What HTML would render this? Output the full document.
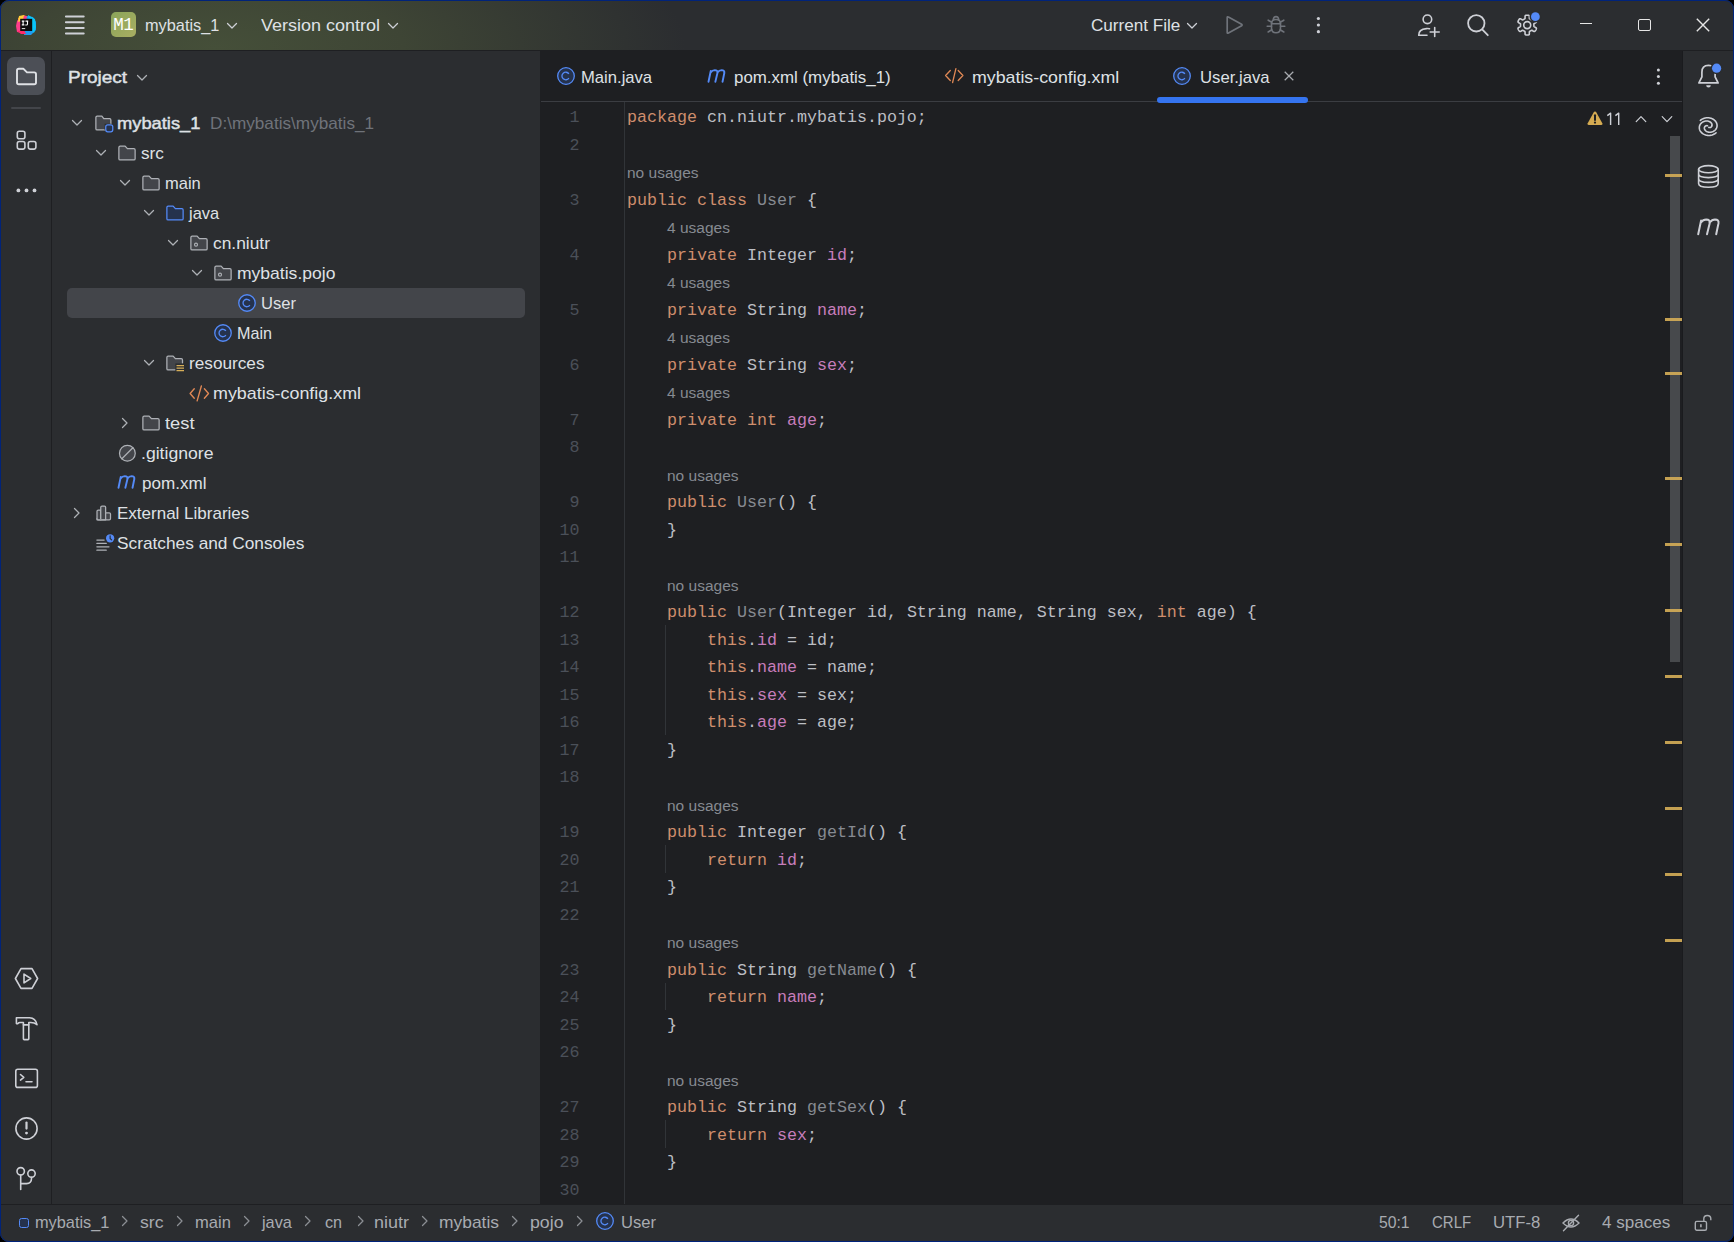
<!DOCTYPE html><html><head><meta charset="utf-8"><style>
*{margin:0;padding:0;box-sizing:border-box}
html,body{width:1734px;height:1242px;overflow:hidden;background:#000}
body{font-family:"Liberation Sans",sans-serif;color:#dfe1e5;position:relative}
.win{position:absolute;left:0;top:0;width:1734px;height:1242px;border-radius:9px;overflow:hidden;background:#2b2d30}
.bd{position:absolute;left:0;top:0;width:1734px;height:1242px;border:1px solid #00237a;border-radius:9px;pointer-events:none}
.a{position:absolute}
.t{position:absolute;white-space:pre;font-size:17px;line-height:20px}
.code{position:absolute;left:0;white-space:pre;font-family:"Liberation Mono",monospace;font-size:16.67px;height:27.5px;line-height:27.5px;color:#bcbec4}
.ln{position:absolute;left:0;white-space:pre;font-family:"Liberation Mono",monospace;font-size:16.67px;height:27.5px;line-height:27.5px;color:#4b5059;text-align:right;width:40px}
.inl{position:absolute;left:0;white-space:pre;font-size:15.5px;height:27.5px;line-height:27.5px;color:#868a91}
.k{color:#cf8e6d}.f{color:#c77dbb}.g{color:#868a91}
svg{position:absolute;overflow:visible}
</style></head><body><div class="win">
<div class="a" style="left:0;top:0;width:1734px;height:50px;background:radial-gradient(ellipse 470px 170px at 215px 48px,#454f39 0%,#3e4535 40%,#2b2d30 100%)"></div>
<div class="a" style="left:0;top:50px;width:1734px;height:1px;background:#1e1f22"></div>
<div class="a" style="left:0;top:51px;width:51px;height:1153px;background:#2b2d30"></div>
<div class="a" style="left:51px;top:51px;width:1px;height:1153px;background:#1e1f22"></div>
<div class="a" style="left:52px;top:51px;width:488px;height:1153px;background:#2b2d30"></div>
<div class="a" style="left:540px;top:51px;width:1142px;height:1153px;background:#1e1f22"></div>
<div class="a" style="left:1683px;top:51px;width:51px;height:1153px;background:#2b2d30"></div>
<div class="a" style="left:0;top:1204px;width:1734px;height:1px;background:#1e1f22"></div>
<div class="a" style="left:0;top:1205px;width:1734px;height:37px;background:#2b2d30"></div>
<div class="a" style="left:67px;top:287.5px;width:458px;height:30px;border-radius:5px;background:#43454a"></div>
<div class="a" style="left:67.50px;top:68.11px;font-size:17px;line-height:18.99px;white-space:pre;color:#dfe1e5;-webkit-text-stroke:0.45px #dfe1e5;transform:scaleX(1.1178);transform-origin:0 0;">Project</div>
<svg style="left:136.3px;top:71.8px" width="12" height="12" viewBox="0 0 12 12" fill="none"><path d="M1.5 3.5L6 8L10.5 3.5" stroke="#aeb1b6" stroke-width="1.25" stroke-linecap="round" stroke-linejoin="round"/></svg>
<svg style="left:71.2px;top:116.7px" width="12" height="12" viewBox="0 0 12 12" fill="none"><path d="M1.5 3.5L6 8L10.5 3.5" stroke="#aeb1b6" stroke-width="1.25" stroke-linecap="round" stroke-linejoin="round"/></svg>
<svg style="left:93.70px;top:112.50px" width="20" height="20" viewBox="0 0 16 16" fill="none" stroke-linecap="round" stroke-linejoin="round"><path d="M8.5 13.5H2.5Q1.5 13.5 1.5 12.5V3.5Q1.5 2.5 2.5 2.5H6.3L7.8 4.5H12.5Q13.5 4.5 13.5 5.5V8.3" fill="#43454a" stroke="#aeb1b6" stroke-width="1"/><path d="M8.5 8.5H13.5V13.5H8.5Z" fill="#2b2d30" stroke="none"/><rect x="9.4" y="9.4" width="5.6" height="5.6" rx="1.6" fill="#25324d" stroke="#548af7" stroke-width="1"/></svg>
<div class="a" style="left:117.00px;top:113.61px;font-size:17px;line-height:18.99px;white-space:pre;color:#dfe1e5;-webkit-text-stroke:0.45px #dfe1e5;transform:scaleX(1.0771);transform-origin:0 0;">mybatis_1</div>
<div class="a" style="left:210.20px;top:113.61px;font-size:17px;line-height:18.99px;white-space:pre;color:#6f737a;transform:scaleX(1.0097);transform-origin:0 0;">D:\mybatis\mybatis_1</div>
<svg style="left:95.2px;top:146.7px" width="12" height="12" viewBox="0 0 12 12" fill="none"><path d="M1.5 3.5L6 8L10.5 3.5" stroke="#aeb1b6" stroke-width="1.25" stroke-linecap="round" stroke-linejoin="round"/></svg>
<svg style="left:116.70px;top:142.50px" width="20" height="20" viewBox="0 0 16 16" fill="none" stroke-linecap="round" stroke-linejoin="round"><path d="M1.5 3.5Q1.5 2.5 2.5 2.5H6.5L8.3 4.5H13.5Q14.5 4.5 14.5 5.5V12.5Q14.5 13.5 13.5 13.5H2.5Q1.5 13.5 1.5 12.5Z" fill="#43454a" stroke="#aeb1b6" stroke-width="1"/></svg>
<div class="a" style="left:141.00px;top:143.62px;font-size:17px;line-height:18.99px;white-space:pre;color:#dfe1e5;transform:scaleX(1.0090);transform-origin:0 0;">src</div>
<svg style="left:119.2px;top:176.7px" width="12" height="12" viewBox="0 0 12 12" fill="none"><path d="M1.5 3.5L6 8L10.5 3.5" stroke="#aeb1b6" stroke-width="1.25" stroke-linecap="round" stroke-linejoin="round"/></svg>
<svg style="left:140.70px;top:172.50px" width="20" height="20" viewBox="0 0 16 16" fill="none" stroke-linecap="round" stroke-linejoin="round"><path d="M1.5 3.5Q1.5 2.5 2.5 2.5H6.5L8.3 4.5H13.5Q14.5 4.5 14.5 5.5V12.5Q14.5 13.5 13.5 13.5H2.5Q1.5 13.5 1.5 12.5Z" fill="#43454a" stroke="#aeb1b6" stroke-width="1"/></svg>
<div class="a" style="left:165.00px;top:173.62px;font-size:17px;line-height:18.99px;white-space:pre;color:#dfe1e5;transform:scaleX(0.9705);transform-origin:0 0;">main</div>
<svg style="left:143.2px;top:206.7px" width="12" height="12" viewBox="0 0 12 12" fill="none"><path d="M1.5 3.5L6 8L10.5 3.5" stroke="#aeb1b6" stroke-width="1.25" stroke-linecap="round" stroke-linejoin="round"/></svg>
<svg style="left:164.70px;top:202.50px" width="20" height="20" viewBox="0 0 16 16" fill="none" stroke-linecap="round" stroke-linejoin="round"><path d="M1.5 3.5Q1.5 2.5 2.5 2.5H6.5L8.3 4.5H13.5Q14.5 4.5 14.5 5.5V12.5Q14.5 13.5 13.5 13.5H2.5Q1.5 13.5 1.5 12.5Z" fill="#25324d" stroke="#548af7" stroke-width="1"/></svg>
<div class="a" style="left:189.41px;top:203.62px;font-size:17px;line-height:18.99px;white-space:pre;color:#dfe1e5;transform:scaleX(0.9651);transform-origin:0 0;">java</div>
<svg style="left:167.2px;top:236.7px" width="12" height="12" viewBox="0 0 12 12" fill="none"><path d="M1.5 3.5L6 8L10.5 3.5" stroke="#aeb1b6" stroke-width="1.25" stroke-linecap="round" stroke-linejoin="round"/></svg>
<svg style="left:188.70px;top:232.50px" width="20" height="20" viewBox="0 0 16 16" fill="none" stroke-linecap="round" stroke-linejoin="round"><path d="M1.5 3.5Q1.5 2.5 2.5 2.5H6.5L8.3 4.5H13.5Q14.5 4.5 14.5 5.5V12.5Q14.5 13.5 13.5 13.5H2.5Q1.5 13.5 1.5 12.5Z" fill="#43454a" stroke="#aeb1b6" stroke-width="1"/><circle cx="5.6" cy="9.3" r="1.2" stroke="#aeb1b6" stroke-width="0.9"/></svg>
<div class="a" style="left:213.00px;top:233.62px;font-size:17px;line-height:18.99px;white-space:pre;color:#dfe1e5;transform:scaleX(1.0222);transform-origin:0 0;">cn.niutr</div>
<svg style="left:191.2px;top:266.7px" width="12" height="12" viewBox="0 0 12 12" fill="none"><path d="M1.5 3.5L6 8L10.5 3.5" stroke="#aeb1b6" stroke-width="1.25" stroke-linecap="round" stroke-linejoin="round"/></svg>
<svg style="left:212.70px;top:262.50px" width="20" height="20" viewBox="0 0 16 16" fill="none" stroke-linecap="round" stroke-linejoin="round"><path d="M1.5 3.5Q1.5 2.5 2.5 2.5H6.5L8.3 4.5H13.5Q14.5 4.5 14.5 5.5V12.5Q14.5 13.5 13.5 13.5H2.5Q1.5 13.5 1.5 12.5Z" fill="#43454a" stroke="#aeb1b6" stroke-width="1"/><circle cx="5.6" cy="9.3" r="1.2" stroke="#aeb1b6" stroke-width="0.9"/></svg>
<div class="a" style="left:237.00px;top:263.62px;font-size:17px;line-height:18.99px;white-space:pre;color:#dfe1e5;transform:scaleX(1.0309);transform-origin:0 0;">mybatis.pojo</div>
<svg style="left:236.70px;top:292.50px" width="20" height="20" viewBox="0 0 16 16" fill="none" stroke-linecap="round" stroke-linejoin="round"><circle cx="8" cy="8" r="6.6" fill="#25324d" stroke="#548af7" stroke-width="1.05"/><path d="M10.3 6.3A3 3 0 1 0 10.3 9.7" stroke="#548af7" stroke-width="1.05" stroke-linecap="butt"/></svg>
<div class="a" style="left:261.00px;top:293.62px;font-size:17px;line-height:18.99px;white-space:pre;color:#dfe1e5;transform:scaleX(0.9757);transform-origin:0 0;">User</div>
<svg style="left:212.70px;top:322.50px" width="20" height="20" viewBox="0 0 16 16" fill="none" stroke-linecap="round" stroke-linejoin="round"><circle cx="8" cy="8" r="6.6" fill="#25324d" stroke="#548af7" stroke-width="1.05"/><path d="M10.3 6.3A3 3 0 1 0 10.3 9.7" stroke="#548af7" stroke-width="1.05" stroke-linecap="butt"/></svg>
<div class="a" style="left:237.00px;top:323.62px;font-size:17px;line-height:18.99px;white-space:pre;color:#dfe1e5;transform:scaleX(0.9488);transform-origin:0 0;">Main</div>
<svg style="left:143.2px;top:356.7px" width="12" height="12" viewBox="0 0 12 12" fill="none"><path d="M1.5 3.5L6 8L10.5 3.5" stroke="#aeb1b6" stroke-width="1.25" stroke-linecap="round" stroke-linejoin="round"/></svg>
<svg style="left:164.70px;top:352.50px" width="20" height="20" viewBox="0 0 16 16" fill="none" stroke-linecap="round" stroke-linejoin="round"><path d="M8.3 13.5H2.5Q1.5 13.5 1.5 12.5V3.5Q1.5 2.5 2.5 2.5H6.5L8.3 4.5H13Q14 4.5 14 5.5V8.3" fill="#43454a" stroke="#aeb1b6" stroke-width="1"/><path d="M8.3 8.3H15.5V15.2H8.3Z" fill="#2b2d30" stroke="none"/><path d="M9.2 10.1H15.2M9.2 12.1H15.2M9.2 14.1H15.2" stroke="#d6ae58" stroke-width="1.05" stroke-linecap="butt"/></svg>
<div class="a" style="left:189.00px;top:353.62px;font-size:17px;line-height:18.99px;white-space:pre;color:#dfe1e5;transform:scaleX(1.0117);transform-origin:0 0;">resources</div>
<svg style="left:188.70px;top:382.50px" width="20" height="20" viewBox="0 0 16 16" fill="none" stroke-linecap="round" stroke-linejoin="round"><path d="M4.2 4.6L0.9 8.4L4.2 12.2M12.3 4.6L15.6 8.4L12.3 12.2M9.9 2.4L6.5 14.3" stroke="#e08855" stroke-width="1.1"/></svg>
<div class="a" style="left:213.00px;top:383.62px;font-size:17px;line-height:18.99px;white-space:pre;color:#dfe1e5;transform:scaleX(1.0514);transform-origin:0 0;">mybatis-config.xml</div>
<svg style="left:119.2px;top:416.5px" width="12" height="12" viewBox="0 0 12 12" fill="none"><path d="M3.5 1.5L8 6L3.5 10.5" stroke="#aeb1b6" stroke-width="1.25" stroke-linecap="round" stroke-linejoin="round"/></svg>
<svg style="left:140.70px;top:412.50px" width="20" height="20" viewBox="0 0 16 16" fill="none" stroke-linecap="round" stroke-linejoin="round"><path d="M1.5 3.5Q1.5 2.5 2.5 2.5H6.5L8.3 4.5H13.5Q14.5 4.5 14.5 5.5V12.5Q14.5 13.5 13.5 13.5H2.5Q1.5 13.5 1.5 12.5Z" fill="#43454a" stroke="#aeb1b6" stroke-width="1"/></svg>
<div class="a" style="left:165.00px;top:413.62px;font-size:17px;line-height:18.99px;white-space:pre;color:#dfe1e5;transform:scaleX(1.0778);transform-origin:0 0;">test</div>
<svg style="left:116.70px;top:442.50px" width="20" height="20" viewBox="0 0 16 16" fill="none" stroke-linecap="round" stroke-linejoin="round"><circle cx="8.3" cy="8.2" r="6.3" fill="#43454a" stroke="#aeb1b6" stroke-width="1"/><path d="M12.7 3.8L3.9 12.6" stroke="#aeb1b6" stroke-width="1"/></svg>
<div class="a" style="left:141.00px;top:443.62px;font-size:17px;line-height:18.99px;white-space:pre;color:#dfe1e5;transform:scaleX(1.0364);transform-origin:0 0;">.gitignore</div>
<svg style="left:115.5px;top:474.5px" width="20.28" height="14.04" viewBox="0 0 26 18"><path d="M3.2 16.3L6.1 2.5M5.7 4.6Q8.2 1.5 11.2 1.5Q15.3 1.6 14.7 5.2L12 16.3M14.5 4.6Q17 1.5 20 1.5Q24.1 1.6 23.5 5.2L21.2 16.3" fill="none" stroke="#548af7" stroke-width="2.44" stroke-linecap="round" stroke-linejoin="round"/></svg>
<div class="a" style="left:141.50px;top:473.62px;font-size:17px;line-height:18.99px;white-space:pre;color:#dfe1e5;transform:scaleX(1.0037);transform-origin:0 0;">pom.xml</div>
<svg style="left:71.2px;top:506.5px" width="12" height="12" viewBox="0 0 12 12" fill="none"><path d="M3.5 1.5L8 6L3.5 10.5" stroke="#aeb1b6" stroke-width="1.25" stroke-linecap="round" stroke-linejoin="round"/></svg>
<svg style="left:94.50px;top:502.50px" width="20" height="20" viewBox="0 0 16 16" fill="none" stroke-linecap="round" stroke-linejoin="round"><path d="M1.6 13.4V6.6Q1.6 5.6 2.6 5.6H4.6V13.4Z" fill="#43454a" stroke="#aeb1b6" stroke-width="1"/><path d="M4.6 13.4V3.3Q4.6 2.4 5.6 2.4H7.6Q8.5 2.4 8.5 3.3V13.4Z" fill="#43454a" stroke="#aeb1b6" stroke-width="1"/><path d="M8.5 13.4V7.8H11.4Q12.4 7.8 12.4 8.8V12.4Q12.4 13.4 11.4 13.4H2.6Q1.6 13.4 1.6 12.4" fill="#43454a" stroke="#aeb1b6" stroke-width="1"/></svg>
<div class="a" style="left:117.00px;top:503.62px;font-size:17px;line-height:18.99px;white-space:pre;color:#dfe1e5;">External Libraries</div>
<svg style="left:94.50px;top:532.50px" width="20" height="20" viewBox="0 0 16 16" fill="none" stroke-linecap="round" stroke-linejoin="round"><path d="M1.5 5.6H7.3M1.5 8.3H9M1.5 11H11.2M1.5 13.7H9" stroke="#aeb1b6" stroke-width="1"/><circle cx="12.1" cy="4.2" r="3.9" fill="#2b2d30"/><circle cx="12.1" cy="4.2" r="3.3" fill="#548af7"/><path d="M12.1 2.3V4.4L13.3 5.5" stroke="#2b2d30" stroke-width="0.9"/></svg>
<div class="a" style="left:117.00px;top:533.62px;font-size:17px;line-height:18.99px;white-space:pre;color:#dfe1e5;transform:scaleX(1.0164);transform-origin:0 0;">Scratches and Consoles</div>
<svg style="left:15px;top:14px" width="22" height="22" viewBox="0 0 22 22"><polygon points="3,4 9,1 13,3 11,10 4,15" fill="#ff8a2a"/><polygon points="2,7 6,2 12,2 14,9 7,19 2,18 1,12" fill="#ff3d8b"/><polygon points="4,2 9,1 8,6 3,8" fill="#ffcf3a"/><polygon points="12,2 18,3 21,8 21,16 16,21 9,21 10,12" fill="#1e9bf0"/><polygon points="13,1 20,5 21,13 19,19 15,15" fill="#09c6f9"/><polygon points="2,17 6,20 11,20 9,16" fill="#ff2a6a"/><rect x="5.2" y="4.8" width="12" height="12.2" fill="#0c0c0c"/><path d="M6.8 7.1H9.4M8.1 7.1V10.9M6.8 10.9H9.4M10.5 7.1H13.2M12.5 7.1V9.9Q12.5 11 11.3 11H10.3" stroke="#fff" stroke-width="1.1" fill="none"/><path d="M6.8 14.6H10.2" stroke="#fff" stroke-width="0.9"/></svg>
<svg style="left:64px;top:14px" width="22" height="22" viewBox="0 0 22 22"><path d="M1.9 2.4H19.7M1.9 8.2H19.7M1.9 13.9H19.7M1.9 19.5H19.7" stroke="#ced0d6" stroke-width="2" stroke-linecap="round"/></svg>
<div class="a" style="left:111px;top:12px;width:25px;height:25px;border-radius:5px;background:linear-gradient(135deg,#8aa55a,#a9ae62)"></div>
<div class="a" style="left:111px;top:12px;width:25px;height:25px;font-family:'Liberation Mono',monospace;font-size:17.5px;line-height:26px;text-align:center;color:#fff;letter-spacing:-0.6px;text-indent:-0.6px">M1</div>
<div class="a" style="left:144.50px;top:15.81px;font-size:17px;line-height:18.99px;white-space:pre;color:#dfe1e5;transform:scaleX(0.9610);transform-origin:0 0;">mybatis_1</div>
<svg style="left:225.8px;top:19.6px" width="12" height="12" viewBox="0 0 12 12" fill="none"><path d="M1.5 3.5L6 8L10.5 3.5" stroke="#ced0d6" stroke-width="1.25" stroke-linecap="round" stroke-linejoin="round"/></svg>
<div class="a" style="left:261.30px;top:15.81px;font-size:17px;line-height:18.99px;white-space:pre;color:#dfe1e5;transform:scaleX(1.0582);transform-origin:0 0;">Version control</div>
<svg style="left:386.5px;top:19.6px" width="12" height="12" viewBox="0 0 12 12" fill="none"><path d="M1.5 3.5L6 8L10.5 3.5" stroke="#ced0d6" stroke-width="1.25" stroke-linecap="round" stroke-linejoin="round"/></svg>
<div class="a" style="left:1090.80px;top:15.81px;font-size:17px;line-height:18.99px;white-space:pre;color:#dfe1e5;transform:scaleX(1.0065);transform-origin:0 0;">Current File</div>
<svg style="left:1186.2px;top:19.6px" width="12" height="12" viewBox="0 0 12 12" fill="none"><path d="M1.5 3.5L6 8L10.5 3.5" stroke="#ced0d6" stroke-width="1.25" stroke-linecap="round" stroke-linejoin="round"/></svg>
<svg style="left:1224px;top:14px" width="22" height="22" viewBox="0 0 22 22"><path d="M3.2 3.6Q3.2 2.3 4.4 3L17.6 10.3Q18.6 11 17.6 11.7L4.4 19Q3.2 19.7 3.2 18.4Z" fill="none" stroke="#6f737a" stroke-width="1.7" stroke-linejoin="round"/></svg>
<svg style="left:1265px;top:14px" width="22" height="22" viewBox="0 0 22 22"><g fill="none" stroke="#6f737a" stroke-width="1.6" stroke-linecap="round"><path d="M6.5 9.5Q6.5 5.5 11 5.5Q15.5 5.5 15.5 9.5V14Q15.5 18.8 11 18.8Q6.5 18.8 6.5 14Z"/><path d="M8.3 5.8Q8.5 2.6 11 2.6Q13.5 2.6 13.7 5.8"/><path d="M6.5 9.8H15.5M6.5 12.2L2.2 12.2M15.5 12.2L19.8 12.2M6.8 8.2L3.2 6.2M15.2 8.2L18.8 6.2M6.8 15.8L3.2 18M15.2 15.8L18.8 18"/></g></svg>
<svg style="left:1312px;top:14px" width="12" height="22" viewBox="0 0 12 22"><circle cx="6.4" cy="4.5" r="1.6" fill="#ced0d6"/><circle cx="6.4" cy="11" r="1.6" fill="#ced0d6"/><circle cx="6.4" cy="17.7" r="1.6" fill="#ced0d6"/></svg>
<svg style="left:1416px;top:12px" width="26" height="26" viewBox="0 0 26 26"><g fill="none" stroke="#ced0d6" stroke-width="1.6" stroke-linecap="round"><circle cx="11.4" cy="7.3" r="4.3"/><path d="M2.8 23.2Q2.5 17.2 10.5 16.6Q12.2 16.5 13.5 16.8"/><path d="M2.8 23.2H11M18.7 15.5V24.5M14.2 20H23.2"/></g></svg>
<svg style="left:1464px;top:11px" width="28" height="28" viewBox="0 0 28 28"><g fill="none" stroke="#ced0d6" stroke-width="1.8" stroke-linecap="round"><circle cx="12.3" cy="12.3" r="8.2"/><path d="M18.4 18.6L23.8 24.2"/></g></svg>
<svg style="left:1516px;top:11px" width="28" height="28" viewBox="0 0 28 28"><path d="M17.90 14.10 L17.90 14.28 L17.89 14.45 L17.89 14.63 L17.87 14.80 L17.87 14.98 L17.87 15.16 L17.91 15.34 L18.08 15.56 L18.49 15.85 L19.22 16.25 L19.92 16.68 L20.30 17.06 L20.41 17.36 L20.39 17.63 L20.33 17.88 L20.23 18.12 L20.13 18.36 L20.02 18.59 L19.90 18.82 L19.77 19.05 L19.64 19.27 L19.50 19.49 L19.35 19.70 L19.20 19.91 L19.04 20.11 L18.85 20.30 L18.63 20.45 L18.31 20.50 L17.80 20.36 L17.07 19.97 L16.36 19.54 L15.90 19.32 L15.63 19.29 L15.45 19.35 L15.29 19.43 L15.14 19.53 L15.00 19.63 L14.85 19.72 L14.70 19.82 L14.55 19.90 L14.40 19.99 L14.24 20.07 L14.09 20.15 L13.93 20.23 L13.77 20.31 L13.62 20.40 L13.48 20.54 L13.37 20.79 L13.33 21.29 L13.35 22.12 L13.32 22.95 L13.19 23.46 L12.98 23.71 L12.74 23.83 L12.49 23.89 L12.23 23.93 L11.98 23.96 L11.72 23.98 L11.46 23.99 L11.20 24.00 L10.94 23.99 L10.68 23.98 L10.42 23.96 L10.17 23.93 L9.91 23.89 L9.66 23.83 L9.42 23.71 L9.21 23.46 L9.08 22.95 L9.05 22.12 L9.07 21.29 L9.03 20.79 L8.92 20.54 L8.78 20.40 L8.63 20.31 L8.47 20.23 L8.31 20.15 L8.16 20.07 L8.00 19.99 L7.85 19.90 L7.70 19.82 L7.55 19.72 L7.40 19.63 L7.26 19.53 L7.11 19.43 L6.95 19.35 L6.77 19.29 L6.50 19.32 L6.04 19.54 L5.33 19.97 L4.60 20.36 L4.09 20.50 L3.77 20.45 L3.55 20.30 L3.36 20.11 L3.20 19.91 L3.05 19.70 L2.90 19.49 L2.76 19.27 L2.63 19.05 L2.50 18.82 L2.38 18.59 L2.27 18.36 L2.17 18.12 L2.07 17.88 L2.01 17.63 L1.99 17.36 L2.10 17.06 L2.48 16.68 L3.18 16.25 L3.91 15.85 L4.32 15.56 L4.49 15.34 L4.53 15.16 L4.53 14.98 L4.53 14.80 L4.51 14.63 L4.51 14.45 L4.50 14.28 L4.50 14.10 L4.50 13.92 L4.51 13.75 L4.51 13.57 L4.53 13.40 L4.53 13.22 L4.53 13.04 L4.49 12.86 L4.32 12.64 L3.91 12.35 L3.18 11.95 L2.48 11.52 L2.10 11.14 L1.99 10.84 L2.01 10.57 L2.07 10.32 L2.17 10.08 L2.27 9.84 L2.38 9.61 L2.50 9.38 L2.63 9.15 L2.76 8.93 L2.90 8.71 L3.05 8.50 L3.20 8.29 L3.36 8.09 L3.55 7.90 L3.77 7.75 L4.09 7.70 L4.60 7.84 L5.33 8.23 L6.04 8.66 L6.50 8.88 L6.77 8.91 L6.95 8.85 L7.11 8.77 L7.26 8.67 L7.40 8.57 L7.55 8.48 L7.70 8.38 L7.85 8.30 L8.00 8.21 L8.16 8.13 L8.31 8.05 L8.47 7.97 L8.63 7.89 L8.78 7.80 L8.92 7.66 L9.03 7.41 L9.07 6.91 L9.05 6.08 L9.08 5.25 L9.21 4.74 L9.42 4.49 L9.66 4.37 L9.91 4.31 L10.17 4.27 L10.42 4.24 L10.68 4.22 L10.94 4.21 L11.20 4.20 L11.46 4.21 L11.72 4.22 L11.98 4.24 L12.23 4.27 L12.49 4.31 L12.74 4.37 L12.98 4.49 L13.19 4.74 L13.32 5.25 L13.35 6.08 L13.33 6.91 L13.37 7.41 L13.48 7.66 L13.62 7.80 L13.77 7.89 L13.93 7.97 L14.09 8.05 L14.24 8.13 L14.40 8.21 L14.55 8.30 L14.70 8.38 L14.85 8.48 L15.00 8.57 L15.14 8.67 L15.29 8.77 L15.45 8.85 L15.63 8.91 L15.90 8.88 L16.36 8.66 L17.07 8.23 L17.80 7.84 L18.31 7.70 L18.63 7.75 L18.85 7.90 L19.04 8.09 L19.20 8.29 L19.35 8.50 L19.50 8.71 L19.64 8.93 L19.77 9.15 L19.90 9.38 L20.02 9.61 L20.13 9.84 L20.23 10.08 L20.33 10.32 L20.39 10.57 L20.41 10.84 L20.30 11.14 L19.92 11.52 L19.22 11.95 L18.49 12.35 L18.08 12.64 L17.91 12.86 L17.87 13.04 L17.87 13.22 L17.87 13.40 L17.89 13.57 L17.89 13.75 L17.90 13.92Z" fill="none" stroke="#ced0d6" stroke-width="1.6" stroke-linejoin="round"/><circle cx="11.2" cy="14.1" r="3.5" fill="none" stroke="#ced0d6" stroke-width="1.6"/><circle cx="19.4" cy="5.7" r="5.9" fill="#2b2d30"/><circle cx="19.4" cy="5.7" r="4.4" fill="#548af7"/></svg>
<div class="a" style="left:1580px;top:23px;width:12px;height:1.4px;background:#e6e6e6"></div>
<div class="a" style="left:1638px;top:19px;width:12.5px;height:12px;border:1.4px solid #e6e6e6;border-radius:2px"></div>
<svg style="left:1696px;top:18px" width="14" height="14" viewBox="0 0 14 14"><path d="M0.8 0.8L13.2 13.2M13.2 0.8L0.8 13.2" stroke="#e6e6e6" stroke-width="1.4"/></svg>
<svg style="left:556px;top:65.9px" width="20" height="20" viewBox="0 0 20 20"><circle cx="10" cy="10" r="8.3" fill="#25324d" stroke="#548af7" stroke-width="1.3"/><path d="M12.9 7.9A3.8 3.8 0 1 0 12.9 12.1" fill="none" stroke="#548af7" stroke-width="1.3"/></svg>
<div class="a" style="left:581.40px;top:67.61px;font-size:17px;line-height:18.99px;white-space:pre;color:#dfe1e5;transform:scaleX(0.9774);transform-origin:0 0;">Main.java</div>
<svg style="left:705.5px;top:68.5px" width="20.28" height="14.04" viewBox="0 0 26 18"><path d="M3.2 16.3L6.1 2.5M5.7 4.6Q8.2 1.5 11.2 1.5Q15.3 1.6 14.7 5.2L12 16.3M14.5 4.6Q17 1.5 20 1.5Q24.1 1.6 23.5 5.2L21.2 16.3" fill="none" stroke="#548af7" stroke-width="2.44" stroke-linecap="round" stroke-linejoin="round"/></svg>
<div class="a" style="left:734.30px;top:67.61px;font-size:17px;line-height:18.99px;white-space:pre;color:#dfe1e5;transform:scaleX(0.9933);transform-origin:0 0;">pom.xml (mybatis_1)</div>
<svg style="left:944px;top:66px" width="22" height="20" viewBox="0 0 22 20"><path d="M6.3 4.5L1.6 9.5L6.3 14.5M14.2 4.5L18.9 9.5L14.2 14.5M11.9 2.6L8.6 16.5" fill="none" stroke="#e08855" stroke-width="1.3" stroke-linecap="round" stroke-linejoin="round"/></svg>
<div class="a" style="left:971.60px;top:67.61px;font-size:17px;line-height:18.99px;white-space:pre;color:#dfe1e5;transform:scaleX(1.0458);transform-origin:0 0;">mybatis-config.xml</div>
<svg style="left:1172px;top:65.8px" width="20" height="20" viewBox="0 0 20 20"><circle cx="10" cy="10" r="8.3" fill="#25324d" stroke="#548af7" stroke-width="1.3"/><path d="M12.9 7.9A3.8 3.8 0 1 0 12.9 12.1" fill="none" stroke="#548af7" stroke-width="1.3"/></svg>
<div class="a" style="left:1200.20px;top:67.61px;font-size:17px;line-height:18.99px;white-space:pre;color:#dfe1e5;transform:scaleX(0.9818);transform-origin:0 0;">User.java</div>
<svg style="left:1284px;top:71px" width="10" height="10" viewBox="0 0 10 10"><path d="M0.7 0.7L9.3 9.3M9.3 0.7L0.7 9.3" stroke="#a8abb0" stroke-width="1.25"/></svg>
<svg style="left:1652px;top:66px" width="12" height="22" viewBox="0 0 12 22"><circle cx="6.4" cy="4" r="1.5" fill="#ced0d6"/><circle cx="6.4" cy="10.6" r="1.5" fill="#ced0d6"/><circle cx="6.4" cy="17.2" r="1.5" fill="#ced0d6"/></svg>
<div class="a" style="left:7px;top:57px;width:38px;height:38px;border-radius:7px;background:#4c4f56"></div>
<svg style="left:14px;top:64px" width="24" height="24" viewBox="0 0 24 24"><path d="M3 6.6Q3 4.8 4.8 4.8H9.5L13 8.35H20.2Q22 8.35 22 10.15V18.4Q22 20.2 20.2 20.2H4.8Q3 20.2 3 18.4Z" fill="none" stroke="#dfe1e5" stroke-width="1.9" stroke-linejoin="round"/></svg>
<div class="a" style="left:11px;top:107px;width:30px;height:2px;border-radius:1px;background:#43454a"></div>
<svg style="left:14px;top:128px" width="24" height="24" viewBox="0 0 24 24"><g fill="none" stroke="#ced0d6" stroke-width="1.6"><rect x="3.3" y="3.2" width="7.6" height="7.6" rx="2"/><rect x="3.3" y="13.5" width="7.6" height="7.6" rx="2"/><rect x="14.3" y="13.5" width="7.6" height="7.6" rx="2"/></g></svg>
<svg style="left:14px;top:180px" width="24" height="20" viewBox="0 0 24 20"><circle cx="4.4" cy="10.4" r="1.9" fill="#ced0d6"/><circle cx="12.5" cy="10.4" r="1.9" fill="#ced0d6"/><circle cx="20.5" cy="10.4" r="1.9" fill="#ced0d6"/></svg>
<svg style="left:14px;top:966px" width="25" height="25" viewBox="0 0 25 25"><g fill="none" stroke="#ced0d6" stroke-width="1.6" stroke-linejoin="round"><path d="M7 2.6H18L23.6 12.5L18 22.4H7L1.4 12.5Z"/><path d="M10 8.1L16.7 12.5L10 16.9Z"/></g></svg>
<svg style="left:14px;top:1015px" width="25" height="27" viewBox="0 0 25 27"><g fill="none" stroke="#ced0d6" stroke-width="1.6" stroke-linejoin="round"><path d="M2.4 2.8H15.5Q21.6 3 23 9.6Q20.5 7.5 16.8 7.5H14.8V9.8H9.4V7.5H6Q4.6 7.5 3.9 8.6H2.4Z"/><path d="M9.4 9.8H14.8V23.8Q14.8 24.6 14 24.6H10.2Q9.4 24.6 9.4 23.8Z"/></g></svg>
<svg style="left:14px;top:1066px" width="25" height="25" viewBox="0 0 25 25"><g fill="none" stroke="#ced0d6" stroke-width="1.6" stroke-linejoin="round" stroke-linecap="round"><rect x="1.8" y="3.2" width="21.6" height="18.2" rx="2"/><path d="M6.5 8.5L9.8 11.3L6.5 14.1M12 15.8H18"/></g></svg>
<svg style="left:14px;top:1116px" width="25" height="25" viewBox="0 0 25 25"><g fill="none" stroke="#ced0d6" stroke-width="1.6" stroke-linecap="round"><circle cx="12.5" cy="12.5" r="10.6"/><path d="M12.5 6.6V12.6" stroke-width="2.2"/></g><circle cx="12.5" cy="17.1" r="1.45" fill="#ced0d6"/></svg>
<svg style="left:14px;top:1166px" width="25" height="25" viewBox="0 0 25 25"><g fill="none" stroke="#ced0d6" stroke-width="1.6" stroke-linecap="round"><circle cx="6.7" cy="5.3" r="3.7"/><circle cx="17.5" cy="7.6" r="3.7"/><path d="M6.7 9V23.5M6.7 17.6H12.5Q17.5 17.6 17.5 12.6V11.3"/></g></svg>
<div class="a" style="left:1682px;top:51px;width:1px;height:1153px;background:#1a1b1e"></div>
<svg style="left:1696px;top:62px" width="26" height="28" viewBox="0 0 26 28"><path d="M2.9 20.9H22.1L19.1 14.9V10.2Q19.1 3.4 12.5 3.4Q5.9 3.4 5.9 10.2V14.9Z" fill="none" stroke="#ced0d6" stroke-width="1.7" stroke-linejoin="round"/><path d="M10.2 23.3A2.3 2.3 0 0 0 14.8 23.3Z" fill="#ced0d6"/><circle cx="20.6" cy="6.2" r="6" fill="#2b2d30"/><circle cx="20.6" cy="6.2" r="4.6" fill="#548af7"/></svg>
<svg style="left:1690px;top:105px" width="40" height="40" viewBox="0 0 40 40"><path d="M10.36 15.38 L11.21 14.70 L12.14 14.12 L13.14 13.64 L14.20 13.25 L15.30 12.98 L16.42 12.81 L17.55 12.76 L18.67 12.81 L19.77 12.97 L20.83 13.24 L21.85 13.60 L22.80 14.05 L23.67 14.59 L24.46 15.20 L25.16 15.88 L25.76 16.61 L26.25 17.39 L26.62 18.20 L26.89 19.02 L27.04 19.86 L27.07 20.70 L27.00 21.52 L26.82 22.32 L26.53 23.08 L26.16 23.80 L25.69 24.47 L25.15 25.07 L24.54 25.61 L23.88 26.07 L23.17 26.46 L22.42 26.77 L21.66 27.00 L20.89 27.15 L20.12 27.22 L19.36 27.21 L18.63 27.12 L17.94 26.97 L17.28 26.75 L16.69 26.48 L16.15 26.15 L15.67 25.78 L15.27 25.38 L14.94 24.96 L14.68 24.51 L14.50 24.06 L14.39 23.61 L14.36 23.17 L14.39 22.74 L14.49 22.34 L14.64 21.97 L14.84 21.64 L15.09 21.35 L15.37 21.11 L15.67 20.91 L15.99 20.76 L16.32 20.67 L16.65 20.63 L16.96 20.63 L17.26 20.69 L17.53 20.78 M26.04 27.82 L25.19 28.50 L24.26 29.08 L23.26 29.56 L22.20 29.95 L21.10 30.22 L19.98 30.39 L18.85 30.44 L17.73 30.39 L16.63 30.23 L15.57 29.96 L14.55 29.60 L13.60 29.15 L12.73 28.61 L11.94 28.00 L11.24 27.32 L10.64 26.59 L10.15 25.81 L9.78 25.00 L9.51 24.18 L9.36 23.34 L9.33 22.50 L9.40 21.68 L9.58 20.88 L9.87 20.12 L10.24 19.40 L10.71 18.73 L11.25 18.13 L11.86 17.59 L12.52 17.13 L13.23 16.74 L13.98 16.43 L14.74 16.20 L15.51 16.05 L16.28 15.98 L17.04 15.99 L17.77 16.08 L18.46 16.23 L19.12 16.45 L19.71 16.72 L20.25 17.05 L20.73 17.42 L21.13 17.82 L21.46 18.24 L21.72 18.69 L21.90 19.14 L22.01 19.59 L22.04 20.03 L22.01 20.46 L21.91 20.86 L21.76 21.23 L21.56 21.56 L21.31 21.85 L21.03 22.09 L20.73 22.29 L20.41 22.44 L20.08 22.53 L19.75 22.57 L19.44 22.57 L19.14 22.51 L18.87 22.42" fill="none" stroke="#ced0d6" stroke-width="1.6" stroke-linecap="round" stroke-linejoin="round"/></svg>
<svg style="left:1696px;top:163px" width="25" height="27" viewBox="0 0 25 27"><g fill="none" stroke="#ced0d6" stroke-width="1.6"><ellipse cx="12.4" cy="6.2" rx="9.8" ry="3.6"/><path d="M2.6 6.2V20.5Q2.6 24.2 12.4 24.2Q22.2 24.2 22.2 20.5V6.2M2.6 11Q2.6 14.6 12.4 14.6Q22.2 14.6 22.2 11M2.6 15.8Q2.6 19.4 12.4 19.4Q22.2 19.4 22.2 15.8"/></g></svg>
<svg style="left:1695px;top:217.5px" width="26.00" height="18.00" viewBox="0 0 26 18"><path d="M3.2 16.3L6.1 2.5M5.7 4.6Q8.2 1.5 11.2 1.5Q15.3 1.6 14.7 5.2L12 16.3M14.5 4.6Q17 1.5 20 1.5Q24.1 1.6 23.5 5.2L21.2 16.3" fill="none" stroke="#ced0d6" stroke-width="2.00" stroke-linecap="round" stroke-linejoin="round"/></svg>
<div class="a" style="left:19px;top:1218px;width:10px;height:10px;border-radius:2.5px;border:1.4px solid #548af7;background:#25324d"></div>
<div class="a" style="left:34.50px;top:1213.02px;font-size:17px;line-height:18.99px;white-space:pre;color:#a8abb0;transform:scaleX(0.9610);transform-origin:0 0;">mybatis_1</div>
<div class="a" style="left:140.40px;top:1213.02px;font-size:17px;line-height:18.99px;white-space:pre;color:#a8abb0;transform:scaleX(1.0355);transform-origin:0 0;">src</div>
<div class="a" style="left:195.30px;top:1213.02px;font-size:17px;line-height:18.99px;white-space:pre;color:#a8abb0;transform:scaleX(0.9732);transform-origin:0 0;">main</div>
<div class="a" style="left:262.41px;top:1213.02px;font-size:17px;line-height:18.99px;white-space:pre;color:#a8abb0;transform:scaleX(0.9588);transform-origin:0 0;">java</div>
<div class="a" style="left:324.70px;top:1213.02px;font-size:17px;line-height:18.99px;white-space:pre;color:#a8abb0;transform:scaleX(0.9534);transform-origin:0 0;">cn</div>
<div class="a" style="left:374.30px;top:1213.02px;font-size:17px;line-height:18.99px;white-space:pre;color:#a8abb0;transform:scaleX(1.0585);transform-origin:0 0;">niutr</div>
<div class="a" style="left:439.00px;top:1213.02px;font-size:17px;line-height:18.99px;white-space:pre;color:#a8abb0;transform:scaleX(1.0245);transform-origin:0 0;">mybatis</div>
<div class="a" style="left:530.00px;top:1213.02px;font-size:17px;line-height:18.99px;white-space:pre;color:#a8abb0;transform:scaleX(1.0426);transform-origin:0 0;">pojo</div>
<div class="a" style="left:621.00px;top:1213.02px;font-size:17px;line-height:18.99px;white-space:pre;color:#a8abb0;transform:scaleX(0.9757);transform-origin:0 0;">User</div>
<svg style="left:118.7px;top:1215.2px" width="12" height="12" viewBox="0 0 12 12" fill="none"><path d="M3.5 1.5L8 6L3.5 10.5" stroke="#8c8f94" stroke-width="1.25" stroke-linecap="round" stroke-linejoin="round"/></svg>
<svg style="left:173.6px;top:1215.2px" width="12" height="12" viewBox="0 0 12 12" fill="none"><path d="M3.5 1.5L8 6L3.5 10.5" stroke="#8c8f94" stroke-width="1.25" stroke-linecap="round" stroke-linejoin="round"/></svg>
<svg style="left:240.5px;top:1215.2px" width="12" height="12" viewBox="0 0 12 12" fill="none"><path d="M3.5 1.5L8 6L3.5 10.5" stroke="#8c8f94" stroke-width="1.25" stroke-linecap="round" stroke-linejoin="round"/></svg>
<svg style="left:302.2px;top:1215.2px" width="12" height="12" viewBox="0 0 12 12" fill="none"><path d="M3.5 1.5L8 6L3.5 10.5" stroke="#8c8f94" stroke-width="1.25" stroke-linecap="round" stroke-linejoin="round"/></svg>
<svg style="left:355px;top:1215.2px" width="12" height="12" viewBox="0 0 12 12" fill="none"><path d="M3.5 1.5L8 6L3.5 10.5" stroke="#8c8f94" stroke-width="1.25" stroke-linecap="round" stroke-linejoin="round"/></svg>
<svg style="left:419px;top:1215.2px" width="12" height="12" viewBox="0 0 12 12" fill="none"><path d="M3.5 1.5L8 6L3.5 10.5" stroke="#8c8f94" stroke-width="1.25" stroke-linecap="round" stroke-linejoin="round"/></svg>
<svg style="left:508.5px;top:1215.2px" width="12" height="12" viewBox="0 0 12 12" fill="none"><path d="M3.5 1.5L8 6L3.5 10.5" stroke="#8c8f94" stroke-width="1.25" stroke-linecap="round" stroke-linejoin="round"/></svg>
<svg style="left:574px;top:1215.2px" width="12" height="12" viewBox="0 0 12 12" fill="none"><path d="M3.5 1.5L8 6L3.5 10.5" stroke="#8c8f94" stroke-width="1.25" stroke-linecap="round" stroke-linejoin="round"/></svg>
<svg style="left:595px;top:1211px" width="20" height="20" viewBox="0 0 20 20"><circle cx="10" cy="10" r="8.3" fill="#25324d" stroke="#548af7" stroke-width="1.3"/><path d="M12.9 7.9A3.8 3.8 0 1 0 12.9 12.1" fill="none" stroke="#548af7" stroke-width="1.3"/></svg>
<div class="a" style="left:1379.40px;top:1213.02px;font-size:17px;line-height:18.99px;white-space:pre;color:#a8abb0;transform:scaleX(0.9254);transform-origin:0 0;">50:1</div>
<div class="a" style="left:1431.60px;top:1213.02px;font-size:17px;line-height:18.99px;white-space:pre;color:#a8abb0;transform:scaleX(0.8812);transform-origin:0 0;">CRLF</div>
<div class="a" style="left:1492.70px;top:1213.02px;font-size:17px;line-height:18.99px;white-space:pre;color:#a8abb0;transform:scaleX(0.9835);transform-origin:0 0;">UTF-8</div>
<svg style="left:1561px;top:1213px" width="20" height="20" viewBox="0 0 20 20"><g fill="none" stroke="#a8abb0" stroke-width="1.4" stroke-linecap="round"><path d="M2 10Q10 2 18 10Q10 18 2 10Z"/><circle cx="10" cy="10" r="2.6"/><path d="M17.5 2.3L2.5 17.8"/></g></svg>
<div class="a" style="left:1601.60px;top:1213.02px;font-size:17px;line-height:18.99px;white-space:pre;color:#a8abb0;transform:scaleX(1.0046);transform-origin:0 0;">4 spaces</div>
<svg style="left:1693px;top:1213px" width="20" height="20" viewBox="0 0 20 20"><g fill="none" stroke="#a8abb0" stroke-width="1.4"><rect x="2.3" y="8.4" width="11.2" height="8.8" rx="1.5"/><path d="M10.8 8.4V5.8Q10.8 2.5 14.3 2.5Q17.8 2.5 17.8 5.8V7.3"/></g><path d="M7.9 11.2V14.2" stroke="#a8abb0" stroke-width="1.6"/></svg>
<div class="a" style="left:0;top:0;width:1734px;height:1204px;overflow:hidden">
<div class="ln" style="left:539.5px;top:104.25px"> 1</div>
<div class="code" style="left:627px;top:104.25px"><span class="k">package</span> cn.niutr.mybatis.pojo;</div>
<div class="ln" style="left:539.5px;top:131.75px"> 2</div>
<div class="code" style="left:627px;top:131.75px"></div>
<div class="inl" style="left:627.0px;top:159.25px">no usages</div>
<div class="ln" style="left:539.5px;top:186.75px"> 3</div>
<div class="code" style="left:627px;top:186.75px"><span class="k">public class </span><span class="g">User</span> {</div>
<div class="inl" style="left:667.0px;top:214.25px">4 usages</div>
<div class="ln" style="left:539.5px;top:241.75px"> 4</div>
<div class="code" style="left:627px;top:241.75px">    <span class="k">private</span> Integer <span class="f">id</span>;</div>
<div class="inl" style="left:667.0px;top:269.25px">4 usages</div>
<div class="ln" style="left:539.5px;top:296.75px"> 5</div>
<div class="code" style="left:627px;top:296.75px">    <span class="k">private</span> String <span class="f">name</span>;</div>
<div class="inl" style="left:667.0px;top:324.25px">4 usages</div>
<div class="ln" style="left:539.5px;top:351.75px"> 6</div>
<div class="code" style="left:627px;top:351.75px">    <span class="k">private</span> String <span class="f">sex</span>;</div>
<div class="inl" style="left:667.0px;top:379.25px">4 usages</div>
<div class="ln" style="left:539.5px;top:406.75px"> 7</div>
<div class="code" style="left:627px;top:406.75px">    <span class="k">private int </span><span class="f">age</span>;</div>
<div class="ln" style="left:539.5px;top:434.25px"> 8</div>
<div class="code" style="left:627px;top:434.25px"></div>
<div class="inl" style="left:667.0px;top:461.75px">no usages</div>
<div class="ln" style="left:539.5px;top:489.25px"> 9</div>
<div class="code" style="left:627px;top:489.25px">    <span class="k">public </span><span class="g">User</span>() {</div>
<div class="ln" style="left:539.5px;top:516.75px">10</div>
<div class="code" style="left:627px;top:516.75px">    }</div>
<div class="ln" style="left:539.5px;top:544.25px">11</div>
<div class="code" style="left:627px;top:544.25px"></div>
<div class="inl" style="left:667.0px;top:571.75px">no usages</div>
<div class="ln" style="left:539.5px;top:599.25px">12</div>
<div class="code" style="left:627px;top:599.25px">    <span class="k">public </span><span class="g">User</span>(Integer id, String name, String sex, <span class="k">int</span> age) {</div>
<div class="ln" style="left:539.5px;top:626.75px">13</div>
<div class="code" style="left:627px;top:626.75px">        <span class="k">this</span>.<span class="f">id</span> = id;</div>
<div class="ln" style="left:539.5px;top:654.25px">14</div>
<div class="code" style="left:627px;top:654.25px">        <span class="k">this</span>.<span class="f">name</span> = name;</div>
<div class="ln" style="left:539.5px;top:681.75px">15</div>
<div class="code" style="left:627px;top:681.75px">        <span class="k">this</span>.<span class="f">sex</span> = sex;</div>
<div class="ln" style="left:539.5px;top:709.25px">16</div>
<div class="code" style="left:627px;top:709.25px">        <span class="k">this</span>.<span class="f">age</span> = age;</div>
<div class="ln" style="left:539.5px;top:736.75px">17</div>
<div class="code" style="left:627px;top:736.75px">    }</div>
<div class="ln" style="left:539.5px;top:764.25px">18</div>
<div class="code" style="left:627px;top:764.25px"></div>
<div class="inl" style="left:667.0px;top:791.75px">no usages</div>
<div class="ln" style="left:539.5px;top:819.25px">19</div>
<div class="code" style="left:627px;top:819.25px">    <span class="k">public</span> Integer <span class="g">getId</span>() {</div>
<div class="ln" style="left:539.5px;top:846.75px">20</div>
<div class="code" style="left:627px;top:846.75px">        <span class="k">return </span><span class="f">id</span>;</div>
<div class="ln" style="left:539.5px;top:874.25px">21</div>
<div class="code" style="left:627px;top:874.25px">    }</div>
<div class="ln" style="left:539.5px;top:901.75px">22</div>
<div class="code" style="left:627px;top:901.75px"></div>
<div class="inl" style="left:667.0px;top:929.25px">no usages</div>
<div class="ln" style="left:539.5px;top:956.75px">23</div>
<div class="code" style="left:627px;top:956.75px">    <span class="k">public</span> String <span class="g">getName</span>() {</div>
<div class="ln" style="left:539.5px;top:984.25px">24</div>
<div class="code" style="left:627px;top:984.25px">        <span class="k">return </span><span class="f">name</span>;</div>
<div class="ln" style="left:539.5px;top:1011.75px">25</div>
<div class="code" style="left:627px;top:1011.75px">    }</div>
<div class="ln" style="left:539.5px;top:1039.25px">26</div>
<div class="code" style="left:627px;top:1039.25px"></div>
<div class="inl" style="left:667.0px;top:1066.75px">no usages</div>
<div class="ln" style="left:539.5px;top:1094.25px">27</div>
<div class="code" style="left:627px;top:1094.25px">    <span class="k">public</span> String <span class="g">getSex</span>() {</div>
<div class="ln" style="left:539.5px;top:1121.75px">28</div>
<div class="code" style="left:627px;top:1121.75px">        <span class="k">return </span><span class="f">sex</span>;</div>
<div class="ln" style="left:539.5px;top:1149.25px">29</div>
<div class="code" style="left:627px;top:1149.25px">    }</div>
<div class="ln" style="left:539.5px;top:1176.75px">30</div>
<div class="code" style="left:627px;top:1176.75px"></div>
</div>
<div class="a" style="left:624px;top:102px;width:1px;height:1102px;background:#313438"></div>
<div class="a" style="left:541px;top:101px;width:1141px;height:1px;background:#3b3d42"></div>
<div class="a" style="left:1157px;top:97px;width:151px;height:5.5px;border-radius:3px;background:#3574f0"></div>
<div class="a" style="left:665px;top:625.00px;width:1px;height:110.00px;background:#313438"></div>
<div class="a" style="left:665px;top:845.00px;width:1px;height:27.50px;background:#313438"></div>
<div class="a" style="left:665px;top:982.50px;width:1px;height:27.50px;background:#313438"></div>
<div class="a" style="left:665px;top:1120.00px;width:1px;height:27.50px;background:#313438"></div>
<svg style="left:1586px;top:110px" width="18" height="17" viewBox="0 0 18 17"><path d="M9 1.6Q9.9 1.6 10.4 2.5L16.3 13.2Q17 14.8 15.3 15H2.7Q1 14.8 1.7 13.2L7.6 2.5Q8.1 1.6 9 1.6Z" fill="#d5ab52"/><path d="M9 5.3V10" stroke="#1e1f22" stroke-width="2" stroke-linecap="round"/><circle cx="9" cy="12.6" r="1.15" fill="#1e1f22"/></svg>
<svg style="left:1605px;top:111px" width="18" height="16" viewBox="0 0 18 16"><path d="M2.3 4.6L5.6 2.2V14.1M10.4 4.6L13.7 2.2V14.1" fill="none" stroke="#ced0d6" stroke-width="1.45" stroke-linejoin="round"/></svg>
<svg style="left:1635px;top:113px" width="12" height="10" viewBox="0 0 12 10"><path d="M1.2 8.6L6 3.6L10.8 8.6" fill="none" stroke="#ced0d6" stroke-width="1.2" stroke-linecap="round" stroke-linejoin="round"/></svg>
<svg style="left:1661px;top:113px" width="12" height="10" viewBox="0 0 12 10"><path d="M1.2 3.6L6 8.6L10.8 3.6" fill="none" stroke="#ced0d6" stroke-width="1.2" stroke-linecap="round" stroke-linejoin="round"/></svg>
<div class="a" style="left:1670px;top:136px;width:10px;height:526px;background:#47494c"></div>
<div class="a" style="left:1665px;top:173.5px;width:17px;height:3px;background:#d6ae58;opacity:0.9"></div>
<div class="a" style="left:1665px;top:318.2px;width:17px;height:3px;background:#d6ae58;opacity:0.9"></div>
<div class="a" style="left:1665px;top:371.8px;width:17px;height:3px;background:#d6ae58;opacity:0.9"></div>
<div class="a" style="left:1665px;top:477.0px;width:17px;height:3px;background:#d6ae58;opacity:0.9"></div>
<div class="a" style="left:1665px;top:542.9px;width:17px;height:3px;background:#d6ae58;opacity:0.9"></div>
<div class="a" style="left:1665px;top:609.3px;width:17px;height:3px;background:#d6ae58;opacity:0.9"></div>
<div class="a" style="left:1665px;top:674.7px;width:17px;height:3px;background:#d6ae58;opacity:0.9"></div>
<div class="a" style="left:1665px;top:740.6px;width:17px;height:3px;background:#d6ae58;opacity:0.9"></div>
<div class="a" style="left:1665px;top:807.0px;width:17px;height:3px;background:#d6ae58;opacity:0.9"></div>
<div class="a" style="left:1665px;top:872.9px;width:17px;height:3px;background:#d6ae58;opacity:0.9"></div>
<div class="a" style="left:1665px;top:938.8px;width:17px;height:3px;background:#d6ae58;opacity:0.9"></div>
</div><div class="bd"></div></body></html>
